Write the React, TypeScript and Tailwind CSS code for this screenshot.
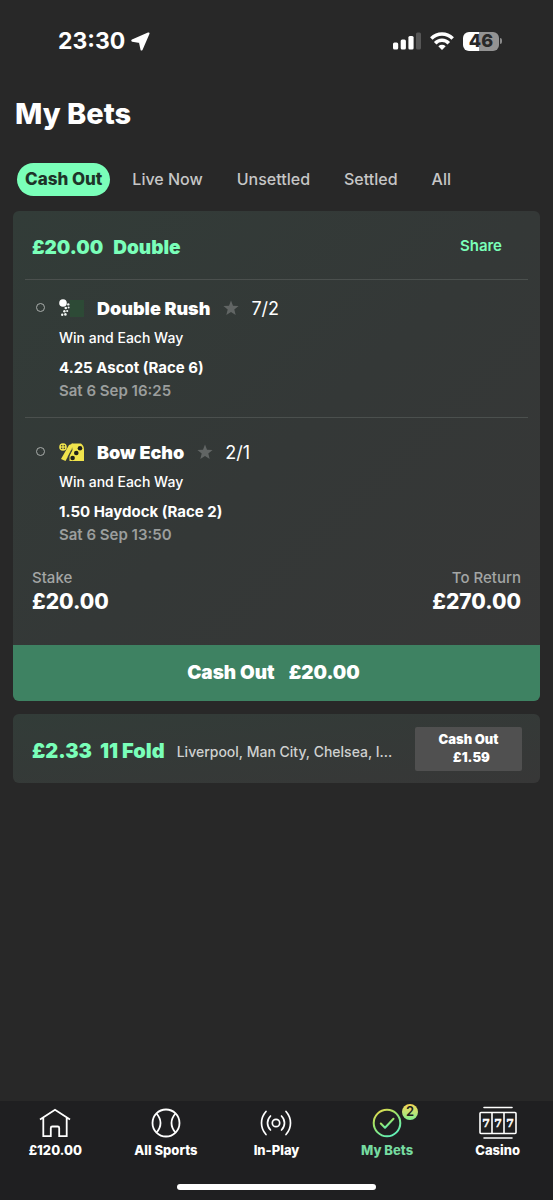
import { useState } from "react";

type Selection = {
  name: string;
  odds: string;
  market: string;
  race: string;
  time: string;
  silk: React.ReactNode;
};

function SpottedSilk() {
  return (
    <svg width="26" height="18" viewBox="0 0 26 18" aria-hidden="true">
      <rect x="11" y="1" width="14" height="17" fill="#2d4a36" />
      <circle cx="4" cy="4" r="3.8" fill="#fff" />
      <g fill="#f2f5f3">
        <circle cx="9.3" cy="5.4" r="1.2" />
        <circle cx="6.8" cy="9" r="1.3" />
        <circle cx="9.6" cy="8.6" r="1" />
        <circle cx="5.4" cy="12.2" r="1.2" />
        <circle cx="8.2" cy="12" r="1.1" />
        <circle cx="3.2" cy="15.8" r="1.2" />
        <circle cx="6.4" cy="15.4" r="1.3" />
      </g>
    </svg>
  );
}

function YellowSilk() {
  return (
    <svg width="26" height="18" viewBox="0 0 26 18" aria-hidden="true">
      <circle cx="4" cy="4" r="3.8" fill="#f0e34c" />
      <g fill="#343837">
        <circle cx="2.7" cy="2.8" r="0.8" />
        <circle cx="5.3" cy="2.8" r="0.8" />
        <circle cx="2.7" cy="5.3" r="0.8" />
        <circle cx="5.3" cy="5.3" r="0.8" />
      </g>
      <path d="M10 2 2 16l4.5 2L12.5 7 14 .5z" fill="#f0e34c" />
      <path d="M12.5.5H22q3 2 3 6V18H10.5V13l3-6z" fill="#f0e34c" />
      <path d="M12.5 7 9 14" stroke="#343837" strokeWidth="0.7" />
      <g fill="#1f211c">
        <circle cx="21" cy="5.2" r="2.3" />
        <circle cx="17.3" cy="10" r="2.3" />
        <circle cx="13.6" cy="15" r="2.3" />
      </g>
    </svg>
  );
}

const selections: Selection[] = [
  {
    name: "Double Rush",
    odds: "7/2",
    market: "Win and Each Way",
    race: "4.25 Ascot (Race 6)",
    time: "Sat 6 Sep 16:25",
    silk: <SpottedSilk />,
  },
  {
    name: "Bow Echo",
    odds: "2/1",
    market: "Win and Each Way",
    race: "1.50 Haydock (Race 2)",
    time: "Sat 6 Sep 13:50",
    silk: <YellowSilk />,
  },
];

const tabs = ["Cash Out", "Live Now", "Unsettled", "Settled", "All"];

function StatusBar() {
  return (
    <div className="flex items-center justify-between pt-[25px] pr-[51px] pl-[58px]">
      <div className="flex items-center gap-1.5">
        <span className="text-[23px] leading-8 font-bold">23:30</span>
        <svg width="19" height="19" viewBox="0 0 19 19" aria-label="Location">
          <path
            d="M17.4 1.5 1.4 8.6 9 9.9l1.6 7.5z"
            fill="#fff"
            stroke="#fff"
            strokeWidth="2.2"
            strokeLinejoin="round"
          />
        </svg>
      </div>
      <div className="flex items-center gap-[9px]">
        <svg width="28" height="18" viewBox="0 0 28 18" aria-label="Signal">
          <rect x="0" y="10.5" width="5.2" height="7" rx="1.5" fill="#fff" />
          <rect x="7.7" y="7.5" width="5.2" height="10" rx="1.5" fill="#fff" />
          <rect x="15.4" y="4" width="5.2" height="13.5" rx="1.5" fill="#fff" />
          <rect x="23" y="0.5" width="5" height="17" rx="1.5" fill="#565656" />
        </svg>
        <svg width="24" height="18" viewBox="0 0 24 18" aria-label="Wi-Fi">
          <g fill="none" stroke="#fff" strokeWidth="3.5">
            <path d="M1.3 6.6Q6 2 12 2t10.7 4.6" />
            <path d="M5.2 11.2Q8 8.2 12 8.2t6.8 3" />
          </g>
          <path d="M8.3 14.2Q12 11.5 15.7 14.2L12 18z" fill="#fff" />
        </svg>
        <div className="flex items-center gap-px">
          <div className="flex h-[19px] w-9 items-center justify-center rounded-md bg-linear-to-r from-white from-45% to-[#939393] to-45% text-[18px] leading-5 font-extrabold text-[#282828]">
            46
          </div>
          <div className="h-1.5 w-0.5 rounded-r-sm bg-[#8a8a8a]" />
        </div>
      </div>
    </div>
  );
}

function SelectionRow({ selection }: { selection: Selection }) {
  return (
    <li className="mx-3 flex border-t border-[#4b504e] pt-[13px] pb-[18px] pl-[11px] last:pt-[19px] last:pb-3.5">
      <span className="mt-2.5 h-[9px] w-[9px] shrink-0 rounded-full border border-[#a9adab]" />
      <div className="pl-3.5">
        <div className="flex h-[30px] items-center">
          {selection.silk}
          <span className="pl-3 text-[18px] font-black">{selection.name}</span>
          <button type="button" aria-label="Favourite" className="mx-3 pl-px">
            <svg width="16" height="16" viewBox="0 0 16 16">
              <path
                d="M8 .5l2 5.2 5.6.3-4.3 3.5 1.4 5.5L8 12l-4.7 3 1.4-5.500L.4 6 6 5.700z"
                fill="#616564"
              />
            </svg>
          </button>
          <span className="text-[18px]">{selection.odds}</span>
        </div>
        <p className="text-[14px] leading-[30px] font-medium">
          {selection.market}
        </p>
        <p className="text-[15px] leading-[30px] font-bold">{selection.race}</p>
        <p className="text-[15px] leading-4 font-semibold text-[#9b9e9d]">
          {selection.time}
        </p>
      </div>
    </li>
  );
}

function HomeIcon() {
  return (
    <svg width="32" height="30" viewBox="0 0 32 30" fill="none" stroke="#fff" strokeWidth="1.8">
      <path d="M1 11.5 16 1.8l15 9.7M4.3 10v18.2h7.5V20q0-1.5 1.5-1.5h5.4q1.5 0 1.5 1.5v8.2h7.5V10" />
    </svg>
  );
}

function BallIcon() {
  return (
    <svg width="30" height="30" viewBox="0 0 30 30" fill="none" stroke="#fff" strokeWidth="1.8">
      <circle cx="15" cy="15" r="13.5" />
      <path d="M5.5 5.5Q9.5 10 9.5 15t-4 9.5M24.5 5.5Q20.5 10 20.5 15t4 9.5" />
    </svg>
  );
}

function LiveIcon() {
  return (
    <svg
      width="32"
      height="30"
      viewBox="0 0 32 30"
      fill="none"
      stroke="#fff"
      strokeWidth="1.7"
      strokeLinecap="round"
    >
      <circle cx="16" cy="15" r="3.7" />
      <path d="M10.5 8Q7.5 11 7.5 15t3 7M21.5 8q3 3 3 7t-3 7M6 3.5Q1.5 8.5 1.5 15T6 26.5M26 3.5q4.5 5 4.5 11.5T26 26.5" />
    </svg>
  );
}

function MyBetsIcon() {
  return (
    <svg width="30" height="30" viewBox="0 0 30 30" fill="none" stroke="url(#ring)" strokeWidth="2">
      <defs>
        <linearGradient id="ring" x1="0" y1="0" x2="0.6" y2="1">
          <stop offset="0" stopColor="#f5d84a" />
          <stop offset="0.45" stopColor="#9be56a" />
          <stop offset="1" stopColor="#63f0b4" />
        </linearGradient>
      </defs>
      <circle cx="15" cy="15" r="13.3" />
      <path d="m8.8 15.5 4.2 4.3 8.5-9" strokeLinecap="round" strokeLinejoin="round" />
    </svg>
  );
}

function SlotsIcon() {
  return (
    <svg width="38" height="34" viewBox="0 0 38 34" fill="none" stroke="#fff" strokeWidth="1.6">
      <path d="M5 1.5h28M5 32h28" strokeLinecap="round" />
      <rect x="1" y="6.5" width="36" height="21" rx="1" />
      <path d="M13 6.5v21M25 6.5v21" />
      <g
        fill="#fff"
        stroke="#fff"
        strokeWidth="0.5"
        fontFamily="'DejaVu Serif', serif"
        fontSize="11"
        fontWeight="700"
        textAnchor="middle"
      >
        <text x="7" y="21">7</text>
        <text x="19" y="21">7</text>
        <text x="31" y="21">7</text>
      </g>
    </svg>
  );
}

const navItems = [
  { label: "£120.00", icon: <HomeIcon /> },
  { label: "All Sports", icon: <BallIcon /> },
  { label: "In-Play", icon: <LiveIcon /> },
  { label: "My Bets", icon: <MyBetsIcon />, badge: 2 },
  { label: "Casino", icon: <SlotsIcon /> },
];

function BottomNav() {
  return (
    <nav className="mt-auto bg-[#1f1f21] pt-[5px] pb-2.5">
      <ul className="grid grid-cols-5">
        {navItems.map((item) => (
          <li key={item.label}>
            <a
              href="#"
              className={
                item.badge
                  ? "flex flex-col items-center text-[#76dba0]"
                  : "flex flex-col items-center text-white"
              }
            >
              <span className="relative flex h-[34px] items-center">
                {item.icon}
                {item.badge && (
                  <span className="absolute -top-0.5 -right-4 flex h-4 w-4 items-center justify-center rounded-full bg-linear-to-b from-[#f3d452] to-[#7cef8d] text-[13px] font-semibold text-[#1f1f21]">
                    {item.badge}
                  </span>
                )}
              </span>
              <span className="text-[13px] leading-5 font-extrabold">
                {item.label}
              </span>
            </a>
          </li>
        ))}
      </ul>
      <div className="mx-auto mt-6 h-1.5 w-[36%] rounded-full bg-white" />
    </nav>
  );
}

export default function App() {
  const [tab, setTab] = useState<string>("Cash Out");

  return (
    <div className="flex min-h-screen flex-col bg-[#282828] font-['Inter','Liberation_Sans',sans-serif] text-white">
      <StatusBar />
      <h1 className="px-[15px] pt-[39px] text-[29px] leading-9 font-extrabold">
        My Bets
      </h1>
      <div className="flex items-center gap-2.5 px-[17px] pt-[31px]">
        {tabs.map((name) => (
          <button
            key={name}
            type="button"
            onClick={() => setTab(name)}
            className={
              name === tab
                ? "h-[33px] rounded-full bg-[#7affb9] px-2 text-[17px] font-extrabold text-[#1e3328]"
                : "h-[33px] px-3 pb-0.5 text-[16px] font-medium text-[#c6c6c6]"
            }
          >
            {name}
          </button>
        ))}
      </div>

      <main className="flex flex-col gap-[13px] px-[13px] pt-[15px]">
        <section className="overflow-hidden rounded-md bg-linear-to-br from-[#323c38] via-[#343837] to-[#373737]">
          <div className="flex h-[68px] items-center justify-between pt-1.5 pr-[38px] pl-[19px] text-[#7affb9]">
            <h2 className="flex gap-2.5 text-[19px] font-black">
              <span>£20.00</span>
              <span>Double</span>
            </h2>
            <button type="button" className="pb-1 text-[15px] font-semibold">
              Share
            </button>
          </div>
          <ul>
            {selections.map((selection) => (
              <SelectionRow key={selection.name} selection={selection} />
            ))}
          </ul>
          <dl className="flex justify-between px-[19px] pt-[9px] pb-[31px]">
            <div>
              <dt className="text-[15px] leading-6 font-medium text-[#a3a6a5]">
                Stake
              </dt>
              <dd className="text-[21px] leading-6 font-extrabold">£20.00</dd>
            </div>
            <div className="text-right">
              <dt className="text-[15px] leading-6 font-medium text-[#a3a6a5]">
                To Return
              </dt>
              <dd className="text-[21px] leading-6 font-extrabold">£270.00</dd>
            </div>
          </dl>
          <button
            type="button"
            className="flex h-14 w-full items-center justify-center gap-3.5 bg-[#3e8262] pr-1.5 text-[19px] font-black"
          >
            <span>Cash Out</span>
            <span>£20.00</span>
          </button>
        </section>

        <section className="flex h-[69px] items-center rounded-md bg-linear-to-br from-[#323c38] to-[#373737] pr-[18px] pl-[19px]">
          <h2 className="flex shrink-0 gap-2 pt-1 text-[20px] font-black text-[#7affb9]">
            <span>£2.33</span>
            <span>11 Fold</span>
          </h2>
          <p className="min-w-0 flex-1 truncate pt-1.5 pl-3 text-[14px] font-medium text-[#cfd1d0]">
            Liverpool, Man City, Chelsea, I...
          </p>
          <button
            type="button"
            className="ml-3 flex h-11 w-[107px] shrink-0 flex-col items-center justify-center rounded-xs bg-[#505050] pb-0.5 text-[13px] leading-[18px] font-black"
          >
            <span>Cash Out</span>
            <span className="pl-1.5">£1.59</span>
          </button>
        </section>
      </main>

      <BottomNav />
    </div>
  );
}
